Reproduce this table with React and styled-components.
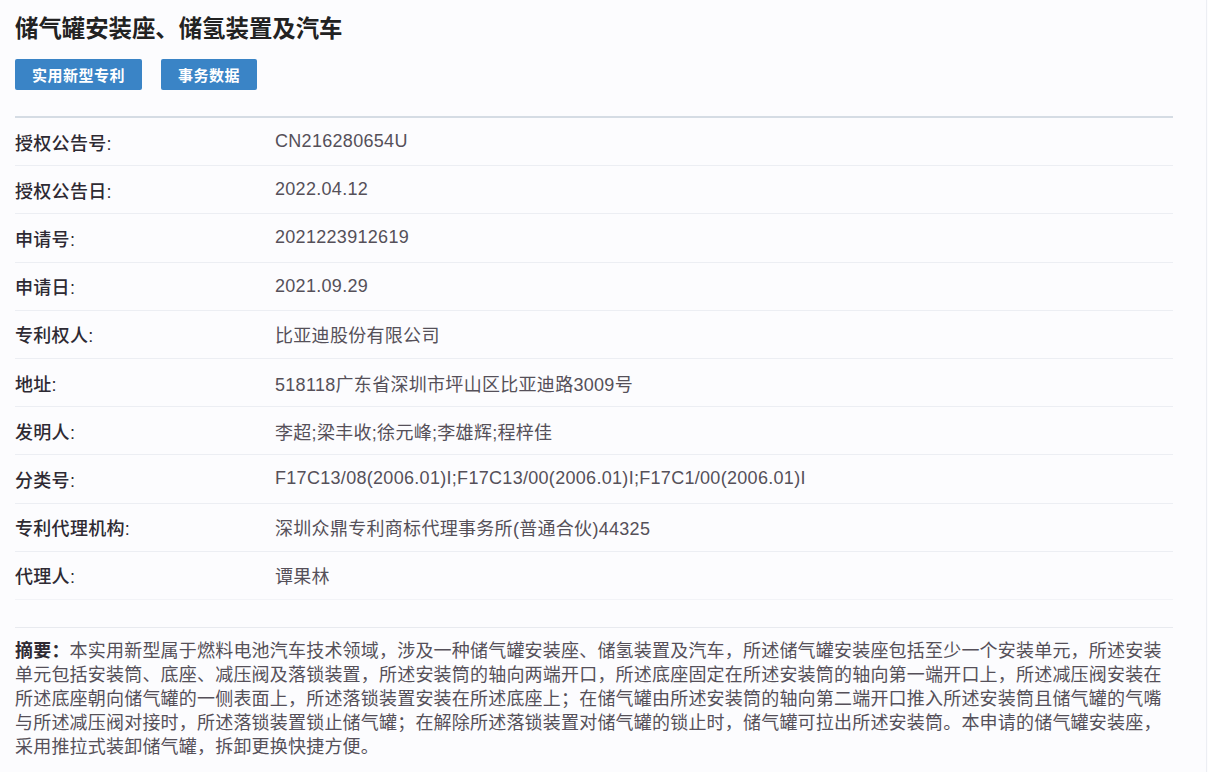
import React from "react";
import styled, { createGlobalStyle } from "styled-components";

const GlobalStyle = createGlobalStyle`
  html, body {
    margin: 0;
    padding: 0;
    background: #fcfcfe;
  }
  body {
    font-family: "Liberation Sans", "Noto Sans CJK SC", sans-serif;
  }
`;

const Page = styled.div`
  box-sizing: border-box;
  width: 1207px;
  min-height: 772px;
  padding: 14px 0 0 15px;
  border-right: 1px solid #eceef3;
  background: #fcfcfe;
`;

const Content = styled.div`
  width: 1158px;
`;

const Title = styled.h1`
  margin: 0;
  font-size: 23.4px;
  line-height: 30px;
  font-weight: 700;
  color: #222;
`;

const Actions = styled.div`
  display: flex;
  gap: 19px;
  margin-top: 15px;
`;

const Button = styled.button`
  height: 31px;
  padding: 0 17px;
  border: none;
  border-radius: 2px;
  background: #3a84c6;
  color: #fff;
  font-family: inherit;
  font-size: 15px;
  font-weight: 700;
  letter-spacing: 0.5px;
  cursor: pointer;
`;

const Table = styled.div`
  margin-top: 26px;
  border-top: 2px solid #d5dce4;
`;

const Row = styled.div`
  box-sizing: border-box;
  display: grid;
  grid-template-columns: 260px 1fr;
  align-items: center;
  height: 48.2px;
  border-bottom: 1px solid ${(p) => (p.$last ? "#f2f3f7" : "#eceef3")};
  font-size: 18px;
`;

const Label = styled.div`
  color: #2e2a33;
  font-weight: 500;
  letter-spacing: 0.3px;
`;

const Value = styled.div`
  color: #555059;
  letter-spacing: 0.3px;
`;

const Abstract = styled.p`
  margin: 27px 0 0;
  padding-top: 11px;
  border-top: 1px solid #e8eaef;
  font-size: 18px;
  letter-spacing: 0.2px;
  line-height: 24px;
  color: #555059;
`;

const AbstractLabel = styled.b`
  color: #2e2a33;
  font-weight: 700;
`;

const fields = [
  ["授权公告号:", "CN216280654U"],
  ["授权公告日:", "2022.04.12"],
  ["申请号:", "2021223912619"],
  ["申请日:", "2021.09.29"],
  ["专利权人:", "比亚迪股份有限公司"],
  ["地址:", "518118广东省深圳市坪山区比亚迪路3009号"],
  ["发明人:", "李超;梁丰收;徐元峰;李雄辉;程梓佳"],
  ["分类号:", "F17C13/08(2006.01)I;F17C13/00(2006.01)I;F17C1/00(2006.01)I"],
  ["专利代理机构:", "深圳众鼎专利商标代理事务所(普通合伙)44325"],
  ["代理人:", "谭果林"],
];

const abstractText =
  "本实用新型属于燃料电池汽车技术领域，涉及一种储气罐安装座、储氢装置及汽车，所述储气罐安装座包括至少一个安装单元，所述安装单元包括安装筒、底座、减压阀及落锁装置，所述安装筒的轴向两端开口，所述底座固定在所述安装筒的轴向第一端开口上，所述减压阀安装在所述底座朝向储气罐的一侧表面上，所述落锁装置安装在所述底座上；在储气罐由所述安装筒的轴向第二端开口推入所述安装筒且储气罐的气嘴与所述减压阀对接时，所述落锁装置锁止储气罐；在解除所述落锁装置对储气罐的锁止时，储气罐可拉出所述安装筒。本申请的储气罐安装座，采用推拉式装卸储气罐，拆卸更换快捷方便。";

export default function App() {
  return (
    <>
      <GlobalStyle />
      <Page>
        <Content>
          <Title>储气罐安装座、储氢装置及汽车</Title>
          <Actions>
            <Button>实用新型专利</Button>
            <Button>事务数据</Button>
          </Actions>
          <Table>
            {fields.map(([label, value], i) => (
              <Row key={label} $last={i === fields.length - 1}>
                <Label>{label}</Label>
                <Value>{value}</Value>
              </Row>
            ))}
          </Table>
          <Abstract>
            <AbstractLabel>摘要：</AbstractLabel>
            {abstractText}
          </Abstract>
        </Content>
      </Page>
    </>
  );
}
